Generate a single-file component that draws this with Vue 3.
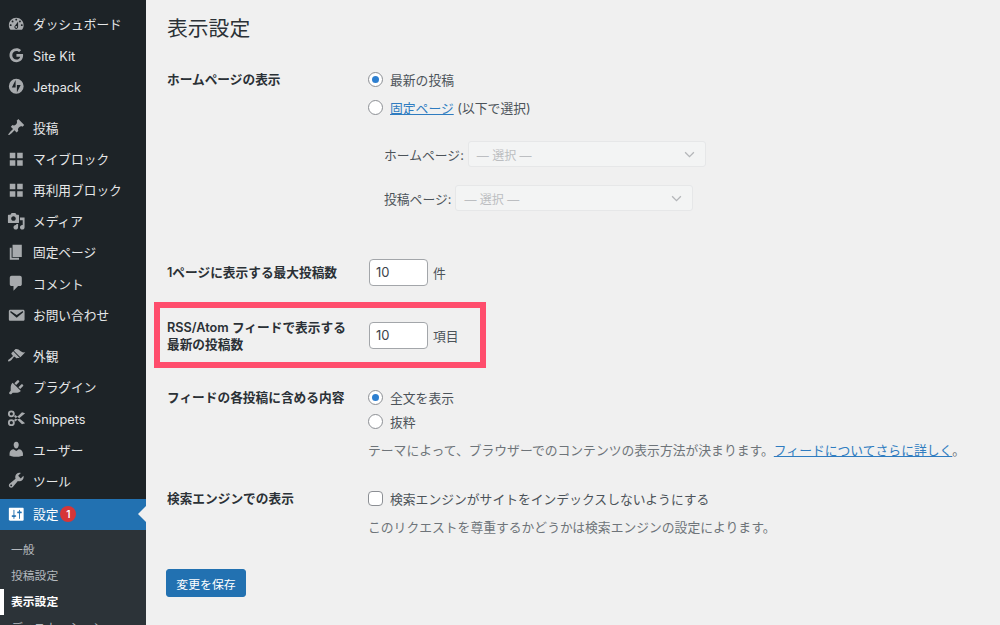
<script setup>
const blocks = 'M3 3h6v6H3zM11 3h6v6h-6zM3 11h6v6H3zM11 11h6v6h-6z'
const groups = [
  [
    { label: 'ダッシュボード', d: 'M3.76 16h12.48c1.1-1.37 1.76-3.11 1.76-5 0-4.42-3.58-8-8-8s-8 3.58-8 8c0 1.89.66 3.63 1.76 5zM10 4c.55 0 1 .45 1 1s-.45 1-1 1-1-.45-1-1 .45-1 1-1zM6 6c.55 0 1 .45 1 1s-.45 1-1 1-1-.45-1-1 .45-1 1-1zm8 0c.55 0 1 .45 1 1s-.45 1-1 1-1-.45-1-1 .45-1 1-1zm-5.37 5.55L12 7v6c0 1.1-.9 2-2 2s-2-.9-2-2c0-.57.24-1.08.63-1.45zM4 10c.55 0 1 .45 1 1s-.45 1-1 1-1-.45-1-1 .45-1 1-1zm12 0c.55 0 1 .45 1 1s-.45 1-1 1-1-.45-1-1 .45-1 1-1zm-5 3c0-.55-.45-1-1-1s-1 .45-1 1 .45 1 1 1 1-.45 1-1z' },
    { label: 'Site Kit', latin: true, d: 'M10.2 2.5c2 0 3.7.7 5 2l-2.1 2.1c-.7-.7-1.7-1.2-2.9-1.2-2.5 0-4.5 2-4.5 4.6s2 4.6 4.5 4.6c2.3 0 3.6-1.3 4-3.1h-4V8.7h7.1c.1.5.1.9.1 1.4 0 4.3-2.9 7.4-7.2 7.4C6 17.500 2.700 14.100 2.700 10s3.300-7.500 7.500-7.500z' },
    { label: 'Jetpack', latin: true, d: 'M10 2a8 8 0 1 0 0 16 8 8 0 0 0 0-16zM9.300 11.300H5.200l4.100-8zM10.700 16.700V8.700h4.100z' }
  ],
  [
    { label: '投稿', d: 'M10.44 3.02l1.82-1.82 6.36 6.35-1.83 1.82c-1.05-.68-2.48-.57-3.41.36l-.75.75c-.92.93-1.04 2.35-.35 3.41l-1.83 1.82-2.41-2.41-2.8 2.79c-.42.42-3.38 2.71-3.8 2.29s1.86-3.39 2.28-3.81l2.79-2.79L4.1 9.36l1.83-1.82c1.05.69 2.48.57 3.4-.36l.75-.75c.93-.92 1.05-2.35.36-3.41z' },
    { label: 'マイブロック', d: blocks },
    { label: '再利用ブロック', d: blocks },
    { label: 'メディア', d: 'M13 11V4c0-.55-.45-1-1-1h-1.67L9 1H5L3.67 3H2c-.55 0-1 .45-1 1v7c0 .55.45 1 1 1h10c.55 0 1-.45 1-1zM7 4.500c1.380 0 2.500 1.120 2.500 2.500S8.380 9.500 7 9.500 4.500 8.380 4.500 7 5.620 4.500 7 4.500zM14 6h5v10.500c0 1.380-1.120 2.500-2.500 2.500S14 17.880 14 16.500s1.120-2.500 2.500-2.500c.170 0 .340.020.500.050V9h-3V6zm-4 8.050V13h2v3.500c0 1.380-1.120 2.500-2.500 2.500S7 17.880 7 16.500 8.120 14 9.500 14c.170 0 .340.020.500.050z' },
    { label: '固定ページ', d: 'M6 15V2h10v13H6zm-1 1h8v2H3V5h2v11z' },
    { label: 'コメント', d: 'M5 2h9c1.100 0 2 .9 2 2v7c0 1.100-.9 2-2 2h-2l-5 5v-5H5c-1.100 0-2-.9-2-2V4c0-1.100.9-2 2-2z' },
    { label: 'お問い合わせ', d: 'M3.870 4h13.250C18.370 4 19 4.590 19 5.790v8.420c0 1.190-.63 1.790-1.880 1.790H3.870c-1.250 0-1.880-.6-1.880-1.790V5.790c0-1.200.63-1.790 1.880-1.790zm6.620 8.600l6.740-5.530c.24-.2.43-.66.13-1.070-.29-.41-.82-.42-1.170-.17l-5.700 3.860L4.800 5.830c-.35-.25-.88-.24-1.170.17-.3.41-.11.87.13 1.070z' }
  ],
  [
    { label: '外観', d: 'M14.480 11.060L7.410 3.990l1.500-1.500c.5-.56 2.300-.47 3.510.32 1.210.8 1.430 1.280 2.910 2.100 1.180.64 2.450 1.260 4.450.85zm-.71.71L6.700 4.700 4.930 6.470c-.39.39-.39 1.020 0 1.410l1.060 1.060c.39.39.39 1.030 0 1.420-.6.6-1.430 1.110-2.210 1.690-.35.26-.7.53-1.010.84C1.430 13.230.76 14.700 1.370 15.310s2.080.06 3.420-1.280c.3-.31.58-.66.84-1.010.58-.78 1.090-1.610 1.690-2.210.39-.39 1.020-.39 1.410 0l1.060 1.060c.39.39 1.020.39 1.410 0z' },
    { label: 'プラグイン', d: 'M13.110 4.360L9.870 7.600 8 5.730l3.240-3.240c.35-.34 1.050-.2 1.560.32.52.51.66 1.210.31 1.550zm-8 1.770l.91-1.120 9.010 9.010-1.190.84c-.71.71-2.630 1.160-3.820 1.160H6.140L4.900 17.260c-.59.59-1.540.59-2.120 0-.59-.58-.59-1.530 0-2.120l1.240-1.240v-3.880c0-1.130.4-3.190 1.090-3.890zm7.260 3.970l3.240-3.240c.34-.35 1.040-.21 1.550.31.52.51.66 1.210.31 1.550l-3.240 3.250z' },
    { label: 'Snippets', latin: true, d: 'M4.700 1.500a3.700 3.700 0 1 0 0 7.400 3.700 3.700 0 0 0 0-7.400zm0 2a1.700 1.700 0 1 1 0 3.400 1.700 1.700 0 0 1 0-3.400zM4.700 11.100a3.700 3.700 0 1 0 0 7.400 3.700 3.700 0 0 0 0-7.400zm0 2a1.700 1.700 0 1 1 0 3.400 1.700 1.700 0 0 1 0-3.400zM7.600 11.800L16.200 3.500 19.600 4.700 9 13.500zM7.600 8.200L9 6.500 19.600 15.300 16.200 16.500z' },
    { label: 'ユーザー', d: 'M10 9.250c-2.270 0-2.730-3.440-2.730-3.440C7 4.020 7.820 2 9.970 2c2.160 0 2.980 2.020 2.710 3.810 0 0-.41 3.440-2.680 3.440zm0 2.570L12.720 10c2.390 0 4.520 2.330 4.520 4.530v2.490s-3.650 1.130-7.240 1.130c-3.650 0-7.240-1.130-7.240-1.130v-2.490c0-2.250 1.940-4.480 4.470-4.480z' },
    { label: 'ツール', d: 'M16.680 9.770c-1.340 1.340-3.300 1.670-4.950.99l-5.410 6.520c-.99.99-2.590.99-3.580 0s-.99-2.590 0-3.570l6.520-5.420c-.68-1.650-.35-3.610.99-4.950 1.280-1.280 3.120-1.620 4.720-1.060l-2.890 2.890 2.820 2.820 2.860-2.870c.53 1.580.18 3.390-1.080 4.650zM3.810 16.210c.4.39 1.040.39 1.430 0 .4-.4.4-1.040 0-1.430-.39-.4-1.030-.4-1.430 0-.39.39-.39 1.030 0 1.430z' }
  ]
]
const settingsIcon = 'M18 16V4c0-.55-.45-1-1-1H3c-.55 0-1 .45-1 1v12c0 .55.45 1 1 1h14c.55 0 1-.45 1-1zM8 11h1c.55 0 1 .45 1 1s-.45 1-1 1H8v1.500c0 .28-.22.5-.5.5s-.5-.22-.5-.5V13H6c-.55 0-1-.45-1-1s.45-1 1-1h1V5.500c0-.28.22-.5.5-.5s.5.22.5.5V11zm5-2h-1c-.55 0-1-.45-1-1s.45-1 1-1h1V5.500c0-.28.22-.5.5-.5s.5.22.5.5V7h1c.55 0 1 .45 1 1s-.45 1-1 1h-1v5.500c0 .28-.22.5-.5.5s-.5-.22-.5-.5V9z'
const submenu = [
  { label: '一般' },
  { label: '投稿設定' },
  { label: '表示設定', current: true },
  { label: 'ディスカッション' }
]
</script>

<template>
  <div class="page">
    <aside class="sidebar">
      <nav class="menu">
        <ul v-for="(group, g) in groups" :key="g" class="group">
          <li v-for="item in group" :key="item.label" class="item">
            <svg class="icon" viewBox="0 0 20 20" fill-rule="evenodd"><path :d="item.d" /></svg>
            <span class="label" :class="{ latin: item.latin }">{{ item.label }}</span>
          </li>
        </ul>
        <div class="item active">
          <svg class="icon" viewBox="0 0 20 20" fill-rule="evenodd"><path :d="settingsIcon" /></svg>
          <span class="label">設定</span>
          <b class="badge">1</b>
        </div>
        <ul class="submenu">
          <li v-for="s in submenu" :key="s.label" class="subitem" :class="{ current: s.current }">{{ s.label }}</li>
        </ul>
      </nav>
    </aside>

    <main class="main">
      <h1>表示設定</h1>

      <section class="row first">
        <div class="th">ホームページの表示</div>
        <div class="td">
          <label class="opt"><i class="radio on"></i>最新の投稿</label>
          <label class="opt second"><i class="radio"></i><span><a>固定ページ</a> (以下で選択)</span></label>
          <div class="pick pick-home">
            <span>ホームページ:</span>
            <div class="select">— 選択 —<svg viewBox="0 0 12 8"><path d="M1 1.500l5 5 5-5" /></svg></div>
          </div>
          <div class="pick pick-post">
            <span>投稿ページ:</span>
            <div class="select">— 選択 —<svg viewBox="0 0 12 8"><path d="M1 1.500l5 5 5-5" /></svg></div>
          </div>
        </div>
      </section>

      <section class="row count-row">
        <div class="th">1ページに表示する最大投稿数</div>
        <div class="inline"><div class="input">10</div><span>件</span></div>
      </section>

      <section class="row rss-row">
        <div class="highlight"></div>
        <div class="th two">RSS/Atom フィードで表示する<br>最新の投稿数</div>
        <div class="inline rss-field"><div class="input">10</div><span>項目</span></div>
      </section>

      <section class="row feed-row">
        <div class="th">フィードの各投稿に含める内容</div>
        <div class="td">
          <label class="opt"><i class="radio on"></i>全文を表示</label>
          <label class="opt feed-second"><i class="radio"></i>抜粋</label>
          <p class="desc">テーマによって、ブラウザーでのコンテンツの表示方法が決まります。<a>フィードについてさらに詳しく</a>。</p>
        </div>
      </section>

      <section class="row search-row">
        <div class="th">検索エンジンでの表示</div>
        <div class="td">
          <label class="opt"><i class="check"></i>検索エンジンがサイトをインデックスしないようにする</label>
          <p class="desc">このリクエストを尊重するかどうかは検索エンジンの設定によります。</p>
        </div>
      </section>

      <button class="save" type="button">変更を保存</button>
    </main>
  </div>
</template>

<style>
html, body { margin: 0; padding: 0; overflow: hidden; }
</style>

<style scoped>
.page {
  display: flex;
  width: 1000px;
  height: 625px;
  overflow: hidden;
  background: #f0f0f0;
  color: #4c5359;
  font-family: Inter, "Noto Sans CJK JP", sans-serif;
  font-size: 12.800px;
}
ul { list-style: none; margin: 0; padding: 0; }

.sidebar {
  flex: 0 0 146px;
  background: #1d2327;
  overflow: hidden;
}
.menu { padding-top: 8.500px; }
.group { margin-bottom: 10px; }
.group:nth-of-type(3) { margin-bottom: 2.500px; }
.item {
  display: flex;
  align-items: center;
  height: 31.200px;
  padding-left: 7px;
  color: #e6e7e8;
  font-size: 12.700px;
  position: relative;
}
.label { padding-bottom: 1px; }
.label.latin { padding: 2px 0 0; }
.icon {
  flex: 0 0 18.500px;
  width: 18.500px;
  height: 18.500px;
  margin-right: 7.500px;
  fill: #a7aaad;
}
.active {
  background: #2271b1;
  color: #fff;
}
.active .icon { fill: #fff; }
.active::after {
  content: "";
  position: absolute;
  right: 0;
  top: 50%;
  margin-top: -8px;
  border: 8px solid transparent;
  border-right-color: #f0f0f0;
  border-left-width: 0;
}
.badge {
  width: 16px;
  height: 16px;
  margin-left: 2px;
  border-radius: 50%;
  background: #d63638;
  color: #fff;
  font-size: 10px;
  font-weight: 600;
  line-height: 16px;
  text-align: center;
}
.submenu {
  background: #2c3338;
  padding-top: 7px;
  height: 120px;
}
.subitem {
  height: 26px;
  line-height: 26px;
  padding-left: 11px;
  color: #b4b9be;
  font-size: 11.800px;
  position: relative;
}
.current {
  color: #fff;
  font-weight: 700;
}
.current::before {
  content: "";
  position: absolute;
  left: 0;
  top: 0;
  width: 4px;
  height: 26px;
  background: #fff;
}

.main {
  flex: 1;
  padding: 15px 0 0 21px;
  min-width: 0;
}
h1 {
  margin: 0 0 27px;
  font-size: 20.800px;
  font-weight: 400;
  line-height: 28px;
  color: #2b3136;
}
.row {
  display: grid;
  grid-template-columns: 201px 1fr;
  position: relative;
}
.td { margin-top: -1px; }
.th {
  font-weight: 600;
  font-size: 12.700px;
  line-height: 20px;
  color: #2b3136;
}
.th.two { line-height: 17px; }
.opt {
  display: flex;
  align-items: center;
  height: 20px;
}
.second { margin-top: 8px; }
.feed-second { margin-top: 4px; }
.radio {
  box-sizing: border-box;
  width: 15px;
  height: 15px;
  margin-right: 7px;
  border: 1px solid #8c8f94;
  border-radius: 50%;
  background: #fff;
  position: relative;
}
.radio.on::after {
  content: "";
  position: absolute;
  left: 3px;
  top: 3px;
  width: 7px;
  height: 7px;
  border-radius: 50%;
  background: #2d7fd0;
}
.check {
  box-sizing: border-box;
  width: 15px;
  height: 15px;
  margin-right: 7px;
  border: 1px solid #8c8f94;
  border-radius: 4px;
  background: #fff;
}
a {
  color: #2f7cc0;
  text-decoration: underline;
}
.pick {
  display: flex;
  align-items: center;
  margin-left: 16px;
  gap: 4px;
}
.pick-home { margin-top: 24px; }
.pick-post { margin-top: 18px; }
.select {
  box-sizing: border-box;
  display: flex;
  align-items: center;
  justify-content: space-between;
  width: 238px;
  height: 26px;
  padding: 0 10px 0 8px;
  border: 1px solid #e6e7e8;
  border-radius: 3px;
  background: #f3f4f4;
  color: #bcbec1;
  font-size: 12px;
}
.select svg {
  width: 11px;
  height: 7px;
  fill: none;
  stroke: #b4b6b9;
  stroke-width: 1.500;
}
.inline {
  display: flex;
  align-items: center;
  gap: 5px;
}
.input {
  box-sizing: border-box;
  width: 59px;
  height: 27px;
  margin-left: 1px;
  padding-left: 6px;
  border: 1px solid #a3a6aa;
  border-radius: 4px;
  background: #fff;
  color: #3c434a;
  font-size: 13px;
  line-height: 25px;
}
.highlight {
  position: absolute;
  left: -13px;
  top: -17px;
  width: 320px;
  height: 54px;
  border: 6px solid #ff4d6d;
}
.count-row { margin-top: 48px; align-items: center; }
.rss-row { margin-top: 33px; align-items: start; }
.rss-field { padding-top: 2.500px; }
.feed-row { margin-top: 35px; }
.search-row { margin-top: 28px; }
.desc {
  margin: 10px 0 0;
  font-size: 12.800px;
  line-height: 20px;
  color: #6e7479;
  white-space: nowrap;
}
.save {
  display: block;
  width: 80px;
  height: 28px;
  margin: 31px 0 0 -1px;
  padding: 0;
  border: 1px solid #2271b1;
  border-radius: 3px;
  background: #2271b1;
  color: #fff;
  font-family: inherit;
  font-size: 11.900px;
}
</style>
